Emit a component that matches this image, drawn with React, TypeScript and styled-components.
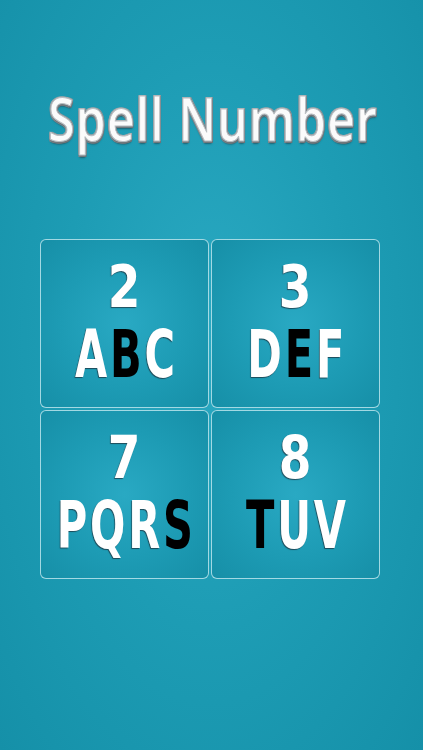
import styled, { createGlobalStyle } from "styled-components";

const GlobalStyle = createGlobalStyle`
  html, body {
    margin: 0;
    padding: 0;
    height: 100%;
  }
  body {
    background: radial-gradient(ellipse at 50% 45%, #2aa9c2 0%, #1d9cb4 50%, #1590a8 100%);
    font-family: "Open Sans", "DejaVu Sans", sans-serif;
  }
`;

interface Key {
  digit: string;
  letters: string;
  mark: number;
}

const keys: Key[] = [
  { digit: "2", letters: "ABC", mark: 1 },
  { digit: "3", letters: "DEF", mark: 1 },
  { digit: "7", letters: "PQRS", mark: 3 },
  { digit: "8", letters: "TUV", mark: 0 },
];

const App = () => {
  return (
    <>
      <GlobalStyle />
      <Screen>
        <Title>Spell Number</Title>
        <Pad>
          {keys.map((k) => (
            <Tile key={k.digit}>
              <Digit>{k.digit}</Digit>
              <Letters>
                {k.letters.split("").map((ch, i) => (
                  <Letter key={i} $active={i === k.mark}>
                    {ch}
                  </Letter>
                ))}
              </Letters>
            </Tile>
          ))}
        </Pad>
      </Screen>
    </>
  );
};

const Screen = styled.div`
  width: 423px;
  height: 750px;
  display: flex;
  flex-direction: column;
  align-items: center;
  padding-top: 80px;
  padding-right: 3px;
  box-sizing: border-box;
`;

/* white face with a grey bevelled rim, built from stacked shadows */
const Title = styled.h1`
  margin: 0 0 0 6px;
  font-family: "Open Sans", sans-serif;
  font-weight: 600;
  font-size: 60px;
  line-height: 76px;
  letter-spacing: 1.5px;
  white-space: nowrap;
  transform: scaleX(0.8);
  color: #fbfbfb;
  -webkit-text-stroke: 1px #b9bec2;
  text-shadow:
    1.5px 0 0 #80878c,
    -1.5px 0 0 #9aa0a4,
    0 1.5px 0 #70777c,
    0 -1.5px 0 #a8adb1,
    1.5px 1.5px 0 #6c7378,
    -1.5px 1.5px 0 #80878c,
    1.5px -1.5px 0 #90969a,
    -1.5px -1.5px 0 #a0a5a9,
    0 3px 2px rgba(30, 45, 55, 0.55);
`;

const Pad = styled.div`
  margin-top: 83px;
  display: grid;
  grid-template-columns: 169px 169px;
  grid-auto-rows: 169px;
  gap: 2px;
`;

const Tile = styled.div`
  border: 1px solid rgba(210, 240, 245, 0.75);
  border-radius: 6px;
  background: radial-gradient(circle at 50% 50%, #29a9c3 0%, #1d9bb4 55%, #168fa7 100%);
  display: flex;
  flex-direction: column;
  align-items: center;
  box-sizing: border-box;
  padding-top: 14px;
  font-family: "DejaVu Sans Condensed", "DejaVu Sans", sans-serif;
  font-stretch: condensed;
  font-weight: 700;
  color: #ffffff;
`;

const Digit = styled.div`
  font-size: 58px;
  line-height: 66px;
  transform: scaleX(0.9);
  text-shadow: -1px 1px 1px rgba(30, 40, 50, 0.7);
`;

const Letters = styled.div`
  font-size: 66px;
  line-height: 70px;
  letter-spacing: 4px;
  transform: scaleX(0.7);
  white-space: nowrap;
  margin-right: -4px;
`;

const Letter = styled.span<{ $active: boolean }>`
  color: ${(p) => (p.$active ? "#000000" : "#ffffff")};
  text-shadow: ${(p) => (p.$active ? "none" : "-1px 1px 1px rgba(30, 40, 50, 0.7)")};
`;

export default App;
